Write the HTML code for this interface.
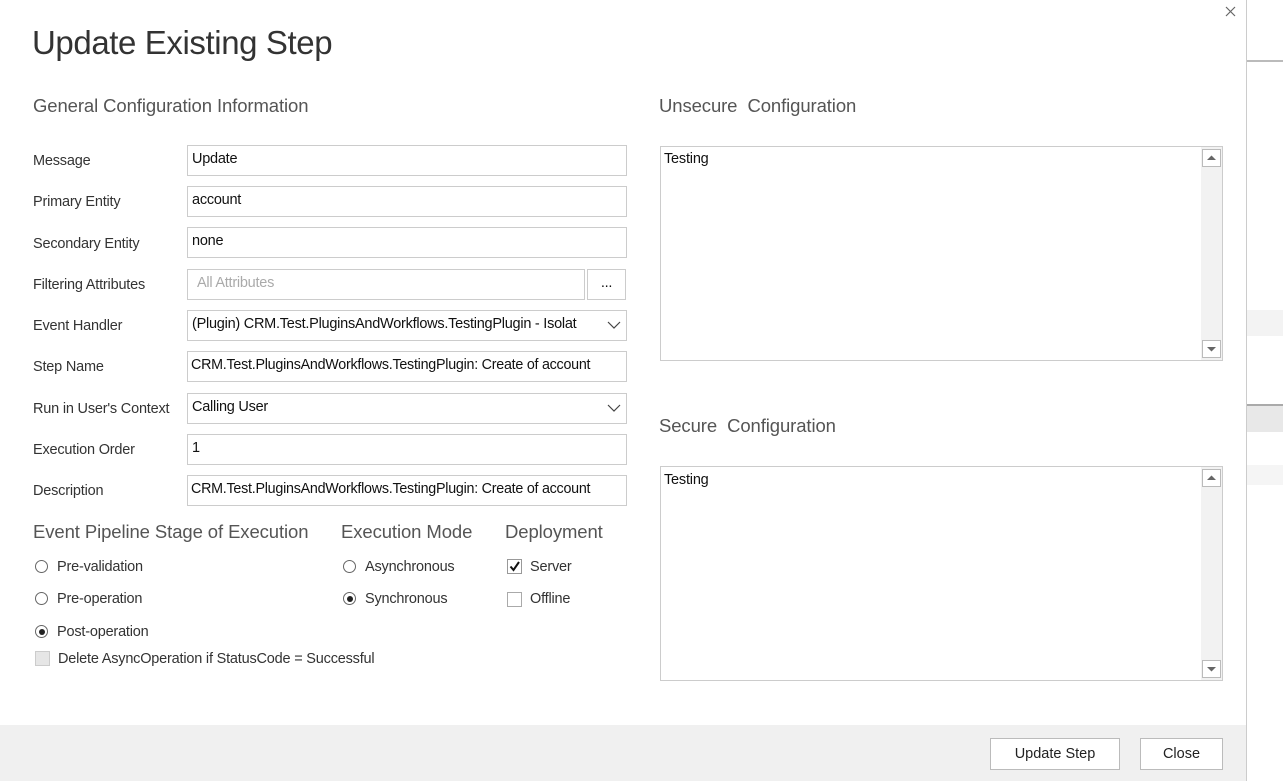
<!DOCTYPE html>
<html><head><style>
body{margin:0;width:1283px;height:781px;background:#fff;font-family:"Liberation Sans",sans-serif;color:#222;position:relative;overflow:hidden}
.a{position:absolute;white-space:nowrap}
.h1{font-size:33px;color:#333;letter-spacing:-0.4px}
.h2{font-size:18.5px;color:#555;letter-spacing:-0.1px}
.lbl{font-size:14.5px;color:#333;letter-spacing:-0.2px}
.in{position:absolute;left:187px;border:1px solid #ccc;font-size:14.5px;line-height:26px;padding-left:4px;box-sizing:border-box;height:31px;width:440px;color:#111;letter-spacing:-0.25px;white-space:nowrap;overflow:hidden}
.ta{position:absolute;left:660px;width:563px;border:1px solid #ccc;box-sizing:border-box}
.sb{position:absolute;right:0;top:0;bottom:0;width:21px;background:#f2f2f2}
.sbb{position:absolute;right:1px;width:19px;height:18px;border:1px solid #bbb;box-sizing:border-box;background:#fff}
.r{position:absolute;width:13px;height:13px;border:1px solid #666;border-radius:50%;box-sizing:border-box}
.r.on:after{content:"";position:absolute;left:2.5px;top:2.5px;width:6px;height:6px;border-radius:50%;background:#222}
.cb{position:absolute;width:15px;height:15px;border:1px solid #aaa;box-sizing:border-box;background:#fff}
.btn{position:absolute;top:738px;height:32px;border:1px solid #bbb;background:#fff;box-sizing:border-box;font-size:14.5px;text-align:center;line-height:30px}
</style></head><body>
<div class="a" style="left:1246px;top:0;width:1px;height:781px;background:#ccc"></div>
<div class="a" style="left:1247px;top:60px;width:36px;height:2px;background:#bbb"></div>
<div class="a" style="left:1247px;top:310px;width:36px;height:26px;background:#f3f3f3"></div>
<div class="a" style="left:1247px;top:404px;width:36px;height:2px;background:#aaa"></div>
<div class="a" style="left:1247px;top:406px;width:36px;height:26px;background:#e8e8e8"></div>
<div class="a" style="left:1247px;top:465px;width:36px;height:20px;background:#f5f5f5"></div>
<svg class="a" style="left:1225px;top:6px" width="11" height="11"><path d="M1 1 L10 10 M10 1 L1 10" stroke="#666" stroke-width="1.2"/></svg>

<div class="a h1" style="left:32px;top:24px">Update Existing Step</div>
<div class="a h2" style="left:33px;top:95px">General Configuration Information</div>
<div class="a h2" style="left:659px;top:95px">Unsecure&nbsp; Configuration</div>
<div class="a h2" style="left:659px;top:415px">Secure&nbsp; Configuration</div>

<div class="a lbl" style="left:33px;top:153px">Message</div>
<div class="a lbl" style="left:33px;top:194px">Primary Entity</div>
<div class="a lbl" style="left:33px;top:236px">Secondary Entity</div>
<div class="a lbl" style="left:33px;top:277px">Filtering Attributes</div>
<div class="a lbl" style="left:33px;top:318px">Event Handler</div>
<div class="a lbl" style="left:33px;top:359px">Step Name</div>
<div class="a lbl" style="left:33px;top:401px">Run in User's Context</div>
<div class="a lbl" style="left:33px;top:442px">Execution Order</div>
<div class="a lbl" style="left:33px;top:483px">Description</div>

<div class="in" style="top:145px">Update</div>
<div class="in" style="top:186px">account</div>
<div class="in" style="top:227px">none</div>
<div class="in" style="top:269px;width:398px;color:#aaa;padding-left:9px">All Attributes</div>
<div class="in" style="top:269px;left:587px;width:39px;text-align:center;padding:0">...</div>
<div class="in" style="top:310px;padding-right:24px">(Plugin) CRM.Test.PluginsAndWorkflows.TestingPlugin - Isolat</div>
<div class="in" style="top:351px;padding-left:3px;font-size:14.3px">CRM.Test.PluginsAndWorkflows.TestingPlugin: Create of account</div>
<div class="in" style="top:393px">Calling User</div>
<div class="in" style="top:434px">1</div>
<div class="in" style="top:475px;padding-left:3px;font-size:14.3px">CRM.Test.PluginsAndWorkflows.TestingPlugin: Create of account</div>
<svg class="a" style="left:607px;top:320px" width="14" height="10"><path d="M1 2 L7 8 L13 2" fill="none" stroke="#444" stroke-width="1.2"/></svg>
<svg class="a" style="left:607px;top:403px" width="14" height="10"><path d="M1 2 L7 8 L13 2" fill="none" stroke="#444" stroke-width="1.2"/></svg>

<div class="a h2" style="left:33px;top:521px">Event Pipeline Stage of Execution</div>
<div class="a h2" style="left:341px;top:521px">Execution Mode</div>
<div class="a h2" style="left:505px;top:521px">Deployment</div>

<div class="r" style="left:35px;top:560px"></div><div class="a lbl" style="left:57px;top:559px">Pre-validation</div>
<div class="r" style="left:35px;top:592px"></div><div class="a lbl" style="left:57px;top:591px">Pre-operation</div>
<div class="r on" style="left:35px;top:625px"></div><div class="a lbl" style="left:57px;top:624px">Post-operation</div>
<div class="cb" style="left:35px;top:651px;background:#e6e6e6;border-color:#ccc"></div><div class="a lbl" style="left:58px;top:651px">Delete AsyncOperation if StatusCode = Successful</div>
<div class="r" style="left:343px;top:560px"></div><div class="a lbl" style="left:365px;top:559px">Asynchronous</div>
<div class="r on" style="left:343px;top:592px"></div><div class="a lbl" style="left:365px;top:591px">Synchronous</div>
<div class="cb" style="left:507px;top:559px;border-color:#999"><svg width="13" height="13" style="position:absolute;left:0;top:0"><path d="M2.5 6.5 L5.5 10 L11 2" fill="none" stroke="#111" stroke-width="2"/></svg></div><div class="a lbl" style="left:530px;top:559px">Server</div>
<div class="cb" style="left:507px;top:592px"></div><div class="a lbl" style="left:530px;top:591px">Offline</div>

<div class="ta" style="top:146px;height:215px"><div class="a lbl" style="left:3px;top:4px;color:#111">Testing</div><div class="sb"><div class="sbb" style="top:2px"><svg width="17" height="16"><path d="M4 10 L8.5 5.5 L13 10Z" fill="#666"/></svg></div><div class="sbb" style="bottom:2px"><svg width="17" height="16"><path d="M4 6 L8.5 10.5 L13 6Z" fill="#666"/></svg></div></div></div>
<div class="ta" style="top:466px;height:215px"><div class="a lbl" style="left:3px;top:5px;color:#111">Testing</div><div class="sb"><div class="sbb" style="top:2px"><svg width="17" height="16"><path d="M4 10 L8.5 5.5 L13 10Z" fill="#666"/></svg></div><div class="sbb" style="bottom:2px"><svg width="17" height="16"><path d="M4 6 L8.5 10.5 L13 6Z" fill="#666"/></svg></div></div></div>

<div class="a" style="left:0;top:725px;width:1246px;height:56px;background:#f0f0f0"></div>
<div class="btn" style="left:990px;width:130px">Update Step</div>
<div class="btn" style="left:1140px;width:83px">Close</div>
</body></html>
